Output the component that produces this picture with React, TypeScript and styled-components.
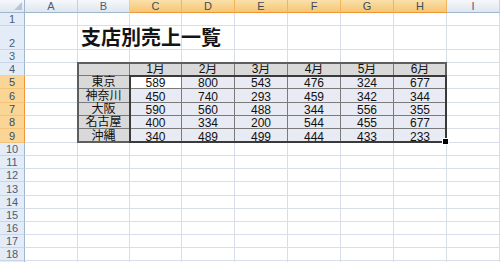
import React from 'react';
import styled, { createGlobalStyle } from 'styled-components';

// sheet geometry, in screen px
const COLS = ['A', 'B', 'C', 'D', 'E', 'F', 'G', 'H', 'I'];
const COL_WIDTHS = [53, 52, 52, 53, 53, 53, 53, 53, 53];
const ROW_HEIGHTS = [13, 24, 13, 13, 13, 14, 13, 13, 14, 13, 13, 13, 14, 13, 13, 13, 13, 13];
const SELECTED_COLS = ['C', 'D', 'E', 'F', 'G', 'H'];
const SELECTED_ROWS = [5, 6, 7, 8, 9];

// table sits on B4:H9
const TABLE_FIRST_ROW = 4;
const TABLE_LAST_ROW = 9;
const TABLE_COLS = ['B', 'C', 'D', 'E', 'F', 'G', 'H'];

const MONTHS = ['1月', '2月', '3月', '4月', '5月', '6月'];
const BRANCHES: { name: string; sales: number[] }[] = [
  { name: '東京', sales: [589, 800, 543, 476, 324, 677] },
  { name: '神奈川', sales: [450, 740, 293, 459, 342, 344] },
  { name: '大阪', sales: [590, 560, 488, 344, 556, 355] },
  { name: '名古屋', sales: [400, 334, 200, 544, 455, 677] },
  { name: '沖縄', sales: [340, 489, 499, 444, 433, 233] },
];

const px = (list: number[]) => list.map((v) => `${v}px`).join(' ');

const GlobalStyle = createGlobalStyle`
  html, body {
    margin: 0;
    padding: 0;
    background: #ffffff;
  }
  body {
    font-family: "Liberation Sans", "Noto Sans CJK JP", sans-serif;
  }
`;

const Sheet = styled.div`
  width: 500px;
  height: 262px;
  overflow: hidden;
  display: grid;
  grid-template-columns: 25px ${px(COL_WIDTHS)};
  grid-template-rows: 13px ${px(ROW_HEIGHTS)} 20px;
  background: #ffffff;
`;

const Corner = styled.div`
  position: relative;
  box-sizing: border-box;
  background: linear-gradient(#f6f8fb, #dfe6ef);
  border-right: 1px solid #9eb6ce;
  border-bottom: 1px solid #9eb6ce;

  &::after {
    content: '';
    position: absolute;
    right: 2px;
    bottom: 2px;
    width: 0;
    height: 0;
    border-left: 8px solid transparent;
    border-bottom: 8px solid #b7c5d6;
  }
`;

const ColHeader = styled.div<{ $selected: boolean }>`
  box-sizing: border-box;
  display: flex;
  align-items: center;
  justify-content: center;
  font-family: "Liberation Sans", sans-serif;
  font-size: 11px;
  color: ${(p) => (p.$selected ? '#3d4a5c' : '#4c5d75')};
  background: ${(p) =>
    p.$selected ? 'linear-gradient(#fbe0a9, #f5c674)' : 'linear-gradient(#f6f8fb, #dfe6ef)'};
  border-right: 1px solid ${(p) => (p.$selected ? '#f2b45c' : '#c5d1de')};
  border-bottom: 1px solid ${(p) => (p.$selected ? '#f29436' : '#9eb6ce')};
`;

const RowHeader = styled.div<{ $selected: boolean }>`
  box-sizing: border-box;
  display: flex;
  align-items: flex-end;
  justify-content: center;
  font-family: "Liberation Sans", sans-serif;
  font-size: 11px;
  line-height: 12px;
  color: ${(p) => (p.$selected ? '#3d4a5c' : '#4c5d75')};
  background: ${(p) => (p.$selected ? '#f9d596' : '#e4ecf7')};
  border-right: 1px solid ${(p) => (p.$selected ? '#f29436' : '#9eb6ce')};
  border-bottom: 1px solid ${(p) => (p.$selected ? '#f5c27a' : '#c9d6e6')};
`;

const Cell = styled.div`
  box-sizing: border-box;
  border-right: 1px solid #d8dee9;
  border-bottom: 1px solid #d8dee9;
`;

const TitleCell = styled(Cell)`
  overflow: visible;
  white-space: nowrap;
  display: flex;
  align-items: flex-end;
  padding-left: 3px;
  padding-bottom: 1px;
  font-family: "Noto Sans CJK JP", sans-serif;
  font-weight: 700;
  font-size: 20px;
  line-height: 22px;
  color: #141414;
  position: relative;
  z-index: 1;
`;

const Table = styled.div`
  grid-column: 3 / 10;
  grid-row: ${TABLE_FIRST_ROW + 1} / ${TABLE_LAST_ROW + 2};
  position: relative;
  display: grid;
  grid-template-columns: ${px(COL_WIDTHS.slice(1, 8))};
  grid-template-rows: ${px(ROW_HEIGHTS.slice(TABLE_FIRST_ROW - 1, TABLE_LAST_ROW))};

  &::after {
    content: '';
    position: absolute;
    inset: -1px 0 0 -1px;
    border: 2px solid #5e5e5e;
    pointer-events: none;
  }
`;

type Kind = 'head' | 'label' | 'data' | 'active';

const TableCell = styled.div<{ $kind: Kind }>`
  box-sizing: border-box;
  display: flex;
  align-items: flex-end;
  justify-content: center;
  font-family: "Liberation Sans", "Noto Sans CJK JP", sans-serif;
  font-size: 12px;
  line-height: ${(p) => (p.$kind === 'label' || p.$kind === 'head' ? '11px' : '10px')};
  color: #111111;
  background: ${(p) =>
    p.$kind === 'active' ? '#ffffff' : p.$kind === 'data' ? '#e8eaf4' : '#d9d9d9'};
  border-right: 1px solid #7a7a7a;
  border-bottom: 1px solid #7a7a7a;
  white-space: nowrap;
`;

// selection C5:H9, drawn over the table
const Selection = styled.div`
  position: absolute;
  left: ${COL_WIDTHS[1] - 1}px;
  top: ${ROW_HEIGHTS[TABLE_FIRST_ROW - 1] - 1}px;
  right: 0;
  bottom: 0;
  border: 2px solid #3a3a3a;
  pointer-events: none;
  z-index: 2;
`;

const FillHandle = styled.div`
  position: absolute;
  right: -4px;
  bottom: -4px;
  width: 5px;
  height: 5px;
  background: #000000;
  border: 1px solid #ffffff;
`;

const isTableCell = (row: number, col: string) =>
  row >= TABLE_FIRST_ROW && row <= TABLE_LAST_ROW && TABLE_COLS.includes(col);

export default function App() {
  const rows = ROW_HEIGHTS.map((_, i) => i + 1);

  return (
    <>
      <GlobalStyle />
      <Sheet>
        <Table>
          <TableCell $kind="head" />
          {MONTHS.map((m) => (
            <TableCell key={m} $kind="head">
              {m}
            </TableCell>
          ))}
          {BRANCHES.map((b, ri) => (
            <React.Fragment key={b.name}>
              <TableCell $kind="label">{b.name}</TableCell>
              {b.sales.map((v, ci) => (
                <TableCell key={ci} $kind={ri === 0 && ci === 0 ? 'active' : 'data'}>
                  {v}
                </TableCell>
              ))}
            </React.Fragment>
          ))}
          <Selection>
            <FillHandle />
          </Selection>
        </Table>

        <Corner />
        {COLS.map((c) => (
          <ColHeader key={c} $selected={SELECTED_COLS.includes(c)}>
            {c}
          </ColHeader>
        ))}

        {rows.map((r) => (
          <React.Fragment key={r}>
            <RowHeader $selected={SELECTED_ROWS.includes(r)}>{r}</RowHeader>
            {COLS.map((c) => {
              if (isTableCell(r, c)) return null;
              if (r === 2 && c === 'B') return <TitleCell key={c}>支店別売上一覧</TitleCell>;
              return <Cell key={c} />;
            })}
          </React.Fragment>
        ))}
        <RowHeader $selected={false} />
        {COLS.map((c) => (
          <Cell key={c} />
        ))}
      </Sheet>
    </>
  );
}
